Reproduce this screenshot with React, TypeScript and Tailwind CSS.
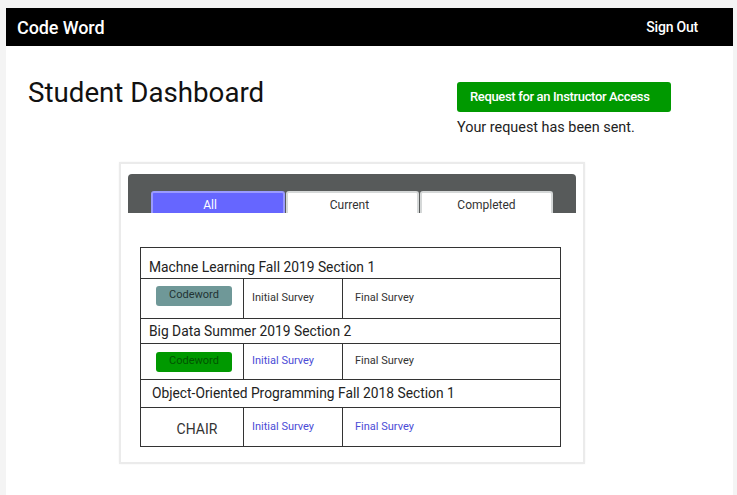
import React from "react";

const font = { fontFamily: "Roboto, 'Liberation Sans', sans-serif" };

function TitleRow({ text, h, pl }: { text: string; h: string; pl: string }) {
  return (
    <div className={`flex items-center border-b border-[#333] text-[13.8px] text-[#222] ${h} ${pl}`}>
      {text}
    </div>
  );
}

function SubRow({
  first,
  initial,
  final,
  h,
}: {
  first: React.ReactNode;
  initial: boolean;
  final: boolean;
  h: string;
}) {
  return (
    <div className={`flex border-b border-[#333] ${h}`}>
      <div className="flex w-[103px] items-center justify-center border-r border-[#333]">{first}</div>
      <div className={`flex w-[99px] items-center border-r border-[#333] pl-2 text-[11px] ${initial ? "text-[#4b4bd6]" : "text-[#333]"}`}>
        Initial Survey
      </div>
      <div className={`flex flex-1 items-center pl-3 text-[11px] ${final ? "text-[#4b4bd6]" : "text-[#333]"}`}>
        Final Survey
      </div>
    </div>
  );
}

export default function App() {
  return (
    <div className="min-h-[495px] bg-[#f4f4f4] pt-[8px]" style={font}>
      <div className="ml-[6px] mr-[4px] min-h-[487px] bg-white">
        <div className="flex h-[38px] items-center justify-between bg-black pl-[11px] pr-[35px] text-white">
          <span className="text-[18px] font-medium tracking-[-0.1px]">Code Word</span>
          <span className="text-[14px] font-medium tracking-[-0.2px]">Sign Out</span>
        </div>
        <div className="flex items-start pt-[30px]">
          <h1 className="ml-[22px] w-[429px] text-[27.7px] leading-[34px] text-[#111]">Student Dashboard</h1>
          <div className="mt-[6px] flex flex-col">
            <button className="h-[30px] w-[214px] rounded-[3px] bg-[#009900] pl-[13px] text-left text-[13px] font-medium tracking-[-0.35px] text-white">
              Request for an Instructor Access
            </button>
            <div className="mt-[6px] text-[14.4px] leading-[20px] text-[#222]">Your request has been sent.</div>
          </div>
        </div>
        <div className="ml-[113px] mt-[24px] w-[466px] border-2 border-[#ebebeb] px-[7px] pb-[15px] pt-[10px] shadow-[0_0_2px_rgba(0,0,0,0.05)]">
          <div className="flex h-[39px] items-end rounded-t-[4px] bg-[#575a5a] pl-[23px]">
            <div className="flex h-[22px] w-[134px] items-center justify-center rounded-t-[3px] border-2 border-b-0 border-[#9a9aff] bg-[#6666ff] pr-[16px] pt-[3px] text-[12px] text-white">
              All
            </div>
            <div className="ml-[1px] flex h-[22px] w-[133px] items-center justify-center rounded-t-[3px] border-2 border-b-0 border-[#d5d8d8] bg-white pr-[6px] pt-[3px] text-[12px] text-[#333]">
              Current
            </div>
            <div className="ml-[1px] flex h-[22px] w-[133px] items-center justify-center rounded-t-[3px] border-2 border-b-0 border-[#d5d8d8] bg-white pt-[3px] text-[12px] text-[#333]">
              Completed
            </div>
          </div>
          <div className="ml-[12px] mt-[34px] w-[421px] border-l border-r border-t border-[#333]">
            <TitleRow text="Machne Learning Fall 2019 Section 1" h="h-[31px] pt-[8px]" pl="pl-[8px]" />
            <SubRow
              h="h-[40px]"
              initial={false}
              final={false}
              first={
                <div className="mb-[6px] ml-[4px] flex h-[20px] w-[76px] items-center justify-center rounded-[3px] bg-[#6f9898] text-[11px] text-[#223333]">
                  Codeword
                </div>
              }
            />
            <TitleRow text="Big Data Summer 2019 Section 2" h="h-[25px]" pl="pl-[8px]" />
            <SubRow
              h="h-[36px]"
              initial={true}
              final={false}
              first={
                <div className="ml-[4px] flex h-[20px] w-[76px] items-center justify-center rounded-[3px] bg-[#009900] text-[11px] text-[#005500]">
                  Codeword
                </div>
              }
            />
            <TitleRow text="Object-Oriented Programming Fall 2018 Section 1" h="h-[28px]" pl="pl-[11px]" />
            <SubRow
              h="h-[39px]"
              initial={true}
              final={true}
              first={<span className="ml-[10px] mt-[4px] text-[14px] text-[#333]">CHAIR</span>}
            />
          </div>
        </div>
      </div>
    </div>
  );
}
